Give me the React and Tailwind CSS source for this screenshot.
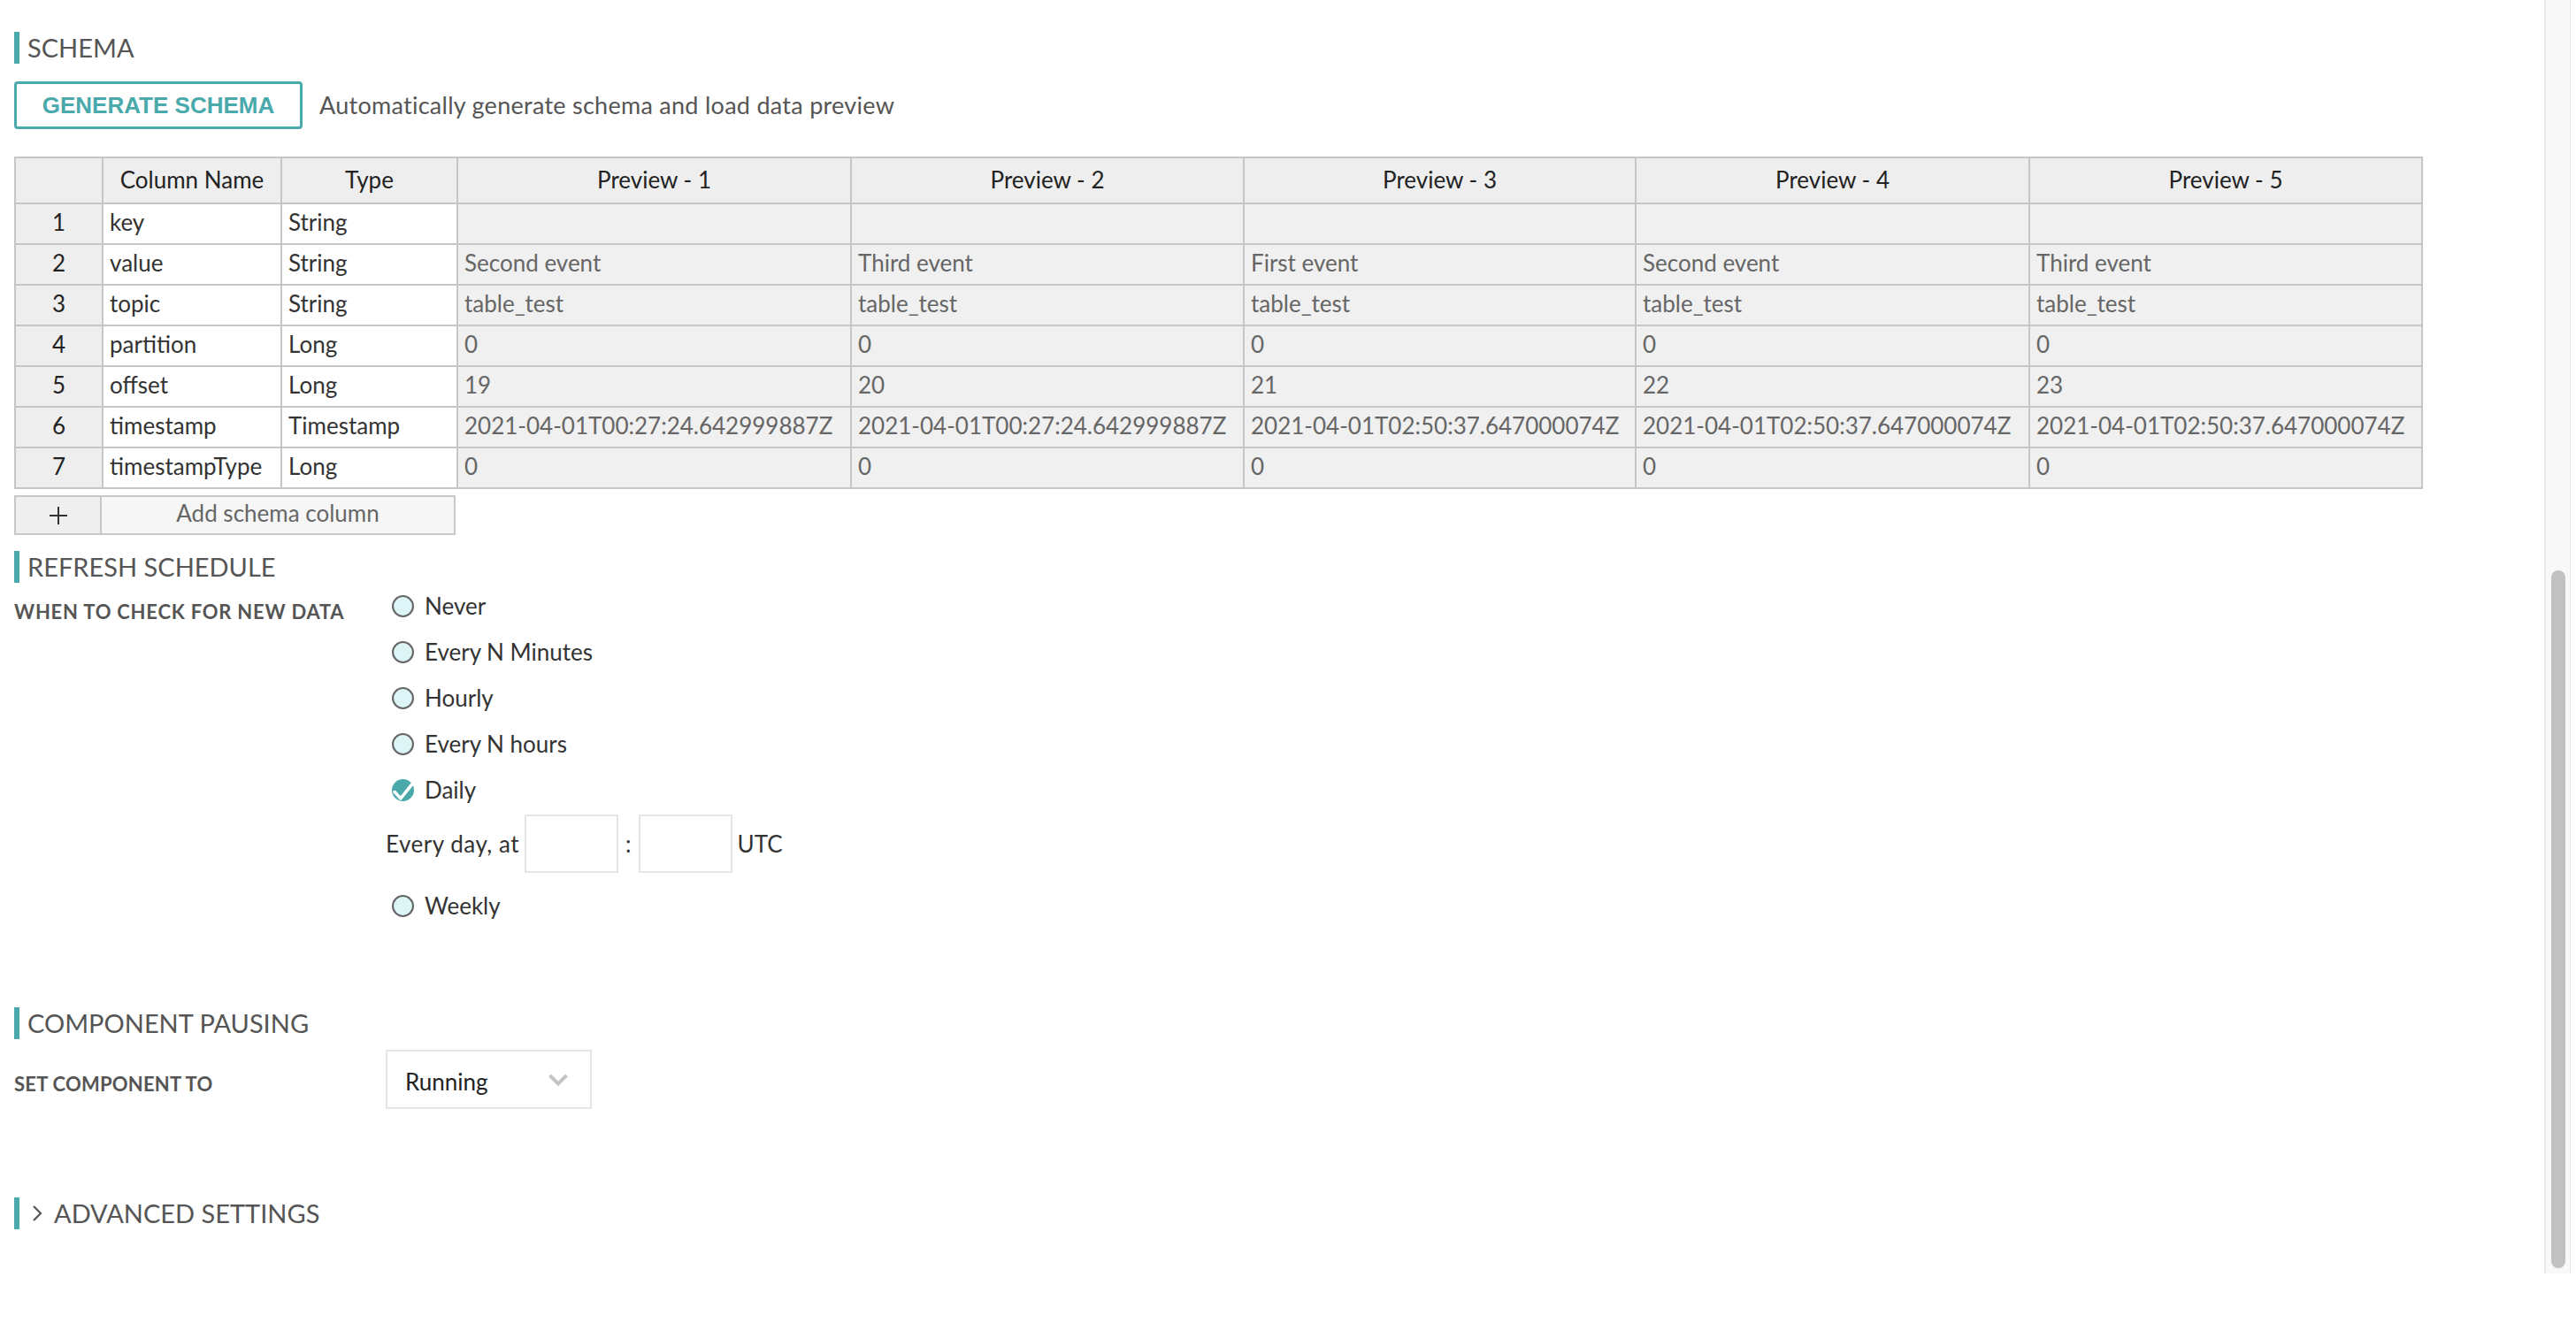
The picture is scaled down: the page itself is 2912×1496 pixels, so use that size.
import React from "react";

const TEAL = "#49a9ab";

const rows = [
  { n: 1, name: "key", type: "String", vals: ["", "", "", "", ""] },
  { n: 2, name: "value", type: "String", vals: ["Second event", "Third event", "First event", "Second event", "Third event"] },
  { n: 3, name: "topic", type: "String", vals: ["table_test", "table_test", "table_test", "table_test", "table_test"] },
  { n: 4, name: "partition", type: "Long", vals: ["0", "0", "0", "0", "0"] },
  { n: 5, name: "offset", type: "Long", vals: ["19", "20", "21", "22", "23"] },
  {
    n: 6,
    name: "timestamp",
    type: "Timestamp",
    vals: [
      "2021-04-01T00:27:24.642999887Z",
      "2021-04-01T00:27:24.642999887Z",
      "2021-04-01T02:50:37.647000074Z",
      "2021-04-01T02:50:37.647000074Z",
      "2021-04-01T02:50:37.647000074Z",
    ],
  },
  { n: 7, name: "timestampType", type: "Long", vals: ["0", "0", "0", "0", "0"] },
];

const schedule = ["Never", "Every N Minutes", "Hourly", "Every N hours", "Daily"];

function SectionTitle({ children }) {
  return (
    <div className="flex h-[36px] items-center border-l-[6px] border-[#49a9ab] pl-[9px] text-[29px] leading-[36px] text-[#555]">
      {children}
    </div>
  );
}

function Radio({ checked }) {
  if (checked) {
    return (
      <svg width="25" height="25" viewBox="0 0 24 24" className="shrink-0">
        <circle cx="12" cy="12" r="12" fill={TEAL} />
        <path d="M3 14 L9.5 21 L22 5.5" fill="none" stroke="#fff" strokeWidth="3.5" strokeLinecap="round" strokeLinejoin="round" />
      </svg>
    );
  }
  return (
    <svg width="25" height="25" viewBox="0 0 24 24" className="shrink-0">
      <circle cx="12" cy="12" r="11" fill="#def5f7" stroke="#666" strokeWidth="2" />
    </svg>
  );
}

function Cell({ className = "", children }) {
  return (
    <div className={`flex items-center overflow-hidden whitespace-nowrap border-b-2 border-r-2 border-[#c6c6c6] ${className}`}>
      {children}
    </div>
  );
}

export default function App() {
  return (
    <div className="flex h-[1496px] w-full overflow-hidden bg-white font-['Lato',sans-serif] text-[26px] text-[#333]">
      <div className="flex-1 pl-[16px] pt-[36px]">
        <SectionTitle>SCHEMA</SectionTitle>

        <div className="mt-[20px] flex items-center gap-[19px]">
          <button className="flex h-[54px] w-[326px] items-center justify-center rounded-[4px] border-[3px] border-[#49a9ab] font-['Liberation_Sans',Arial,sans-serif] text-[26px] font-bold text-[#49a9ab]">
            GENERATE SCHEMA
          </button>
          <span className="text-[27px] tracking-[0.01em] text-[#555]">Automatically generate schema and load data preview</span>
        </div>

        <div className="mt-[31px] grid w-fit grid-cols-[99px_202px_199px_445px_444px_443px_445px_444px] border-l-2 border-t-2 border-[#c6c6c6]">
          <Cell className="h-[52px] bg-[#eeeeee]" />
          <Cell className="h-[52px] justify-center bg-[#eeeeee] pb-[2px] text-[#222]">Column Name</Cell>
          <Cell className="h-[52px] justify-center bg-[#eeeeee] pb-[2px] text-[#222]">Type</Cell>
          {[1, 2, 3, 4, 5].map((i) => (
            <Cell key={i} className="h-[52px] justify-center bg-[#eeeeee] pb-[2px] text-[#222]">
              Preview - {i}
            </Cell>
          ))}
          {rows.map((r) => (
            <React.Fragment key={r.n}>
              <Cell className="h-[46px] justify-center bg-[#eeeeee] pb-[3px] text-[#222]">{r.n}</Cell>
              <Cell className="h-[46px] bg-white pb-[3px] pl-[7px] text-[#333]">{r.name}</Cell>
              <Cell className="h-[46px] bg-white pb-[3px] pl-[7px] text-[#333]">{r.type}</Cell>
              {r.vals.map((v, i) => (
                <Cell key={i} className="h-[46px] bg-[#f0f0f0] pb-[3px] pl-[7px] text-[#666]">
                  {v}
                </Cell>
              ))}
            </React.Fragment>
          ))}
        </div>

        <div className="mt-[7px] flex h-[45px] w-[499px] border-2 border-[#c8c8c8]">
          <div className="flex w-[97px] items-center justify-center border-r-2 border-[#c8c8c8] bg-[#efefef]">
            <svg width="22" height="22" viewBox="0 0 22 22">
              <path d="M11 1 V21 M1 11 H21" stroke="#333" strokeWidth="2" />
            </svg>
          </div>
          <div className="flex flex-1 items-center justify-center bg-[#f6f6f6] pb-[5px] text-[#666]">Add schema column</div>
        </div>

        <div className="mt-[18px]">
          <SectionTitle>REFRESH SCHEDULE</SectionTitle>
        </div>

        <div className="flex">
          <div className="w-[420px] pt-[18px] text-[22px] font-bold leading-[30px] tracking-[0.035em] text-[#555]">
            WHEN TO CHECK FOR NEW DATA
          </div>
          <div className="flex flex-col">
            {schedule.map((s) => (
              <div key={s} className="ml-[7px] flex h-[52px] items-center gap-[12px]">
                <Radio checked={s === "Daily"} />
                <span>{s}</span>
              </div>
            ))}
            <div className="mt-[2px] flex h-[66px] items-center gap-[6px]">
              <span className="tracking-[0.02em]">Every day, at</span>
              <div className="h-[66px] w-[106px] border-2 border-[#e6e6e6]" />
              <span className="px-[2px]">:</span>
              <div className="h-[66px] w-[106px] border-2 border-[#e6e6e6]" />
              <span>UTC</span>
            </div>
            <div className="ml-[7px] mt-[11px] flex h-[52px] items-center gap-[12px]">
              <Radio />
              <span>Weekly</span>
            </div>
          </div>
        </div>

        <div className="mt-[89px]">
          <SectionTitle>COMPONENT PAUSING</SectionTitle>
        </div>

        <div className="mt-[12px] flex items-start">
          <div className="mt-[24px] w-[420px] text-[22px] font-bold leading-[30px] tracking-[0.01em] text-[#555]">
            SET COMPONENT TO
          </div>
          <div className="flex h-[67px] w-[233px] items-center justify-between border-2 border-[#e6e6e6] pl-[20px] pr-[24px] text-[#222]">
            <span className="pt-[5px]">Running</span>
            <svg width="24" height="16" viewBox="0 0 24 16">
              <path d="M2.5 3 L12 12.5 L21.5 3" fill="none" stroke="#c4c4c4" strokeWidth="4" />
            </svg>
          </div>
        </div>

        <div className="mt-[100px] flex h-[36px] items-center border-l-[6px] border-[#49a9ab] pl-[13px] text-[29px] leading-[36px] text-[#555]">
          <svg width="14" height="20" viewBox="0 0 14 20" className="mr-[12px]">
            <path d="M3 2 L11 10 L3 18" fill="none" stroke="#555" strokeWidth="2.2" />
          </svg>
          ADVANCED SETTINGS
        </div>
      </div>

      <div className="mr-[6px] flex h-[1440px] w-[30px] flex-col border-l-2 border-r border-[#e8e8e8] bg-[#f8f8f8]">
        <div className="mx-auto mt-[645px] h-[789px] w-[16px] rounded-full bg-[#c1c1c1]" />
      </div>
    </div>
  );
}
